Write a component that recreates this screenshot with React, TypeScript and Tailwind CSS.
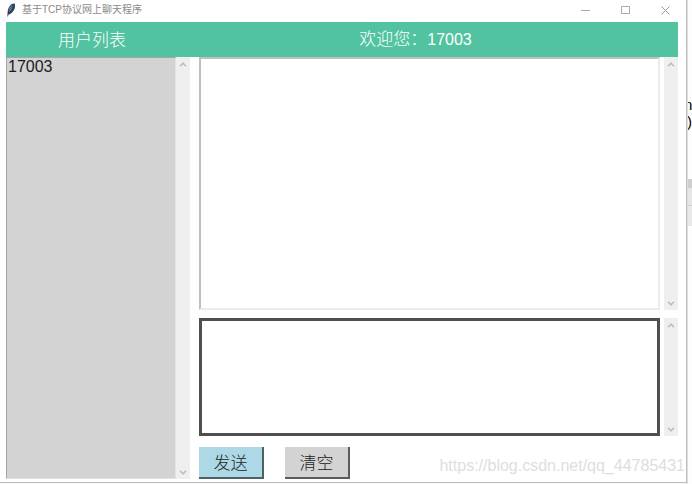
import React, { useState } from 'react';
import clsx from 'clsx';

const users = ['17003'];

function Feather() {
  return (
    <svg viewBox="0 0 10 14" className="w-[10px] h-[14px]" aria-hidden="true">
      <path d="M1.800 11.600C1.200 8.800 1.800 5.400 3.800 2.900 5.200 1.200 7.400.3 8.800.7c.6 2.200.2 4.800-1.100 6.900-1.200 1.900-2.800 3.200-4.700 3.800z" fill="#2f4358" />
      <path d="M2.800 9.400C2.600 6.800 3.800 3.800 6.600 1.900 6.400 4.600 5 7.400 2.800 9.400z" fill="#86b0dc" />
      <path d="M1.500 13.400C2.100 9.800 3.800 6 6.800 2.600" fill="none" stroke="#1b2530" strokeWidth=".7" />
    </svg>
  );
}

function WindowButtons() {
  return (
    <div className="flex h-full">
      <button aria-label="最小化" className="w-10 flex items-center justify-center">
        <svg viewBox="0 0 9 9" className="w-[9px] h-[9px]" fill="none" stroke="#aaa">
          <path d="M0 4.500h9" />
        </svg>
      </button>
      <button aria-label="最大化" className="w-10 flex items-center justify-center">
        <svg viewBox="0 0 9 9" className="w-[9px] h-[9px]" fill="none" stroke="#aaa">
          <path d="M.5.5h8v7h-8z" />
        </svg>
      </button>
      <button aria-label="关闭" className="w-10 flex items-center justify-center">
        <svg viewBox="0 0 9 9" className="w-[9px] h-[9px]" fill="none" stroke="#999">
          <path d="M.5.5l8 8M8.500.5l-8 8" />
        </svg>
      </button>
    </div>
  );
}

function Arrow({ down }: { down?: boolean }) {
  return (
    <svg viewBox="0 0 8 5" className="w-2 h-[5px]" fill="none" stroke="#bdbdbd" strokeWidth="1.600">
      <path d={down ? 'M1 .8l3 3 3-3' : 'M1 4.200l3-3 3 3'} />
    </svg>
  );
}

function ScrollBar({ className }: { className?: string }) {
  return (
    <div className={clsx('w-[14px] shrink-0 bg-[#efefef] flex flex-col justify-between', className)}>
      <button aria-label="向上滚动" className="h-[14px] flex items-center justify-center">
        <Arrow />
      </button>
      <button aria-label="向下滚动" className="h-[14px] flex items-center justify-center">
        <Arrow down />
      </button>
    </div>
  );
}

// sliver of the editor window that sits behind the chat window
function BackgroundWindow() {
  return (
    <div
      aria-hidden="true"
      className="w-[5px] shrink-0 overflow-hidden bg-[#fdfdfd] border-l border-[#dedede] pt-24 font-['Liberation_Sans'] text-[15px] leading-[17px] text-black"
    >
      <div className="-ml-1">n</div>
      <div className="-ml-px">)</div>
      <div className="mt-[49px] h-[9px] bg-[#cfcfcf]" />
      <div className="h-[18px] bg-[#e6e6e6] border-b border-[#d2d2d2]" />
      <div className="h-5 bg-[#e9e9e9]" />
    </div>
  );
}

export default function App() {
  const [log, setLog] = useState('');
  const [draft, setDraft] = useState('');

  const send = () => {
    if (!draft.trim()) return;
    setLog(log + users[0] + ': ' + draft + '\n');
    setDraft('');
  };

  return (
    <div className="flex h-screen bg-[#f7f7f7] font-['Liberation_Sans','Noto_Sans_CJK_SC',sans-serif]">
      <div className="relative flex-1 min-w-0 mb-px flex flex-col bg-white border-r border-b border-[#bdbdbd]">
        <div className="h-[22px] shrink-0 flex items-start justify-between pl-[6px] pr-px">
          <div className="flex items-center gap-[6px] pt-[3px] text-[10px] leading-[14px] text-[#8a8a8a]">
            <Feather />
            <span>基于TCP协议网上聊天程序</span>
          </div>
          <div className="h-5">
            <WindowButtons />
          </div>
        </div>

        <div className="flex-1 min-h-0 flex flex-col pl-[6px] pr-2 pb-[3px]">
          <header className="h-[35px] shrink-0 flex items-center pb-[2px] text-center text-[17px] font-light leading-6 text-white bg-[#52c3a1] font-['Noto_Sans_CJK_SC',sans-serif]">
            <h2 className="w-[172px] shrink-0 font-light">用户列表</h2>
            <h1 className="flex-1 pr-[25px] font-light">
              欢迎您：<span className="font-['Liberation_Sans'] text-[16px]">17003</span>
            </h1>
          </header>

          <div className="flex-1 min-h-0 flex gap-[9px]">
            <div className="w-[184px] shrink-0 flex">
              <ul
                aria-label="用户列表"
                className="flex-1 pl-px bg-[#d3d3d3] border border-t-[#a5a5a5] border-l-[#a5a5a5] border-r-[#e3e3e3] border-b-[#e3e3e3] text-[16px] leading-[18px] text-[#1c1c1c]"
              >
                {users.map((u) => (
                  <li key={u}>{u}</li>
                ))}
              </ul>
              <ScrollBar />
            </div>

            <div className="flex-1 min-w-0 flex flex-col">
              <div className="flex-1 min-h-0 flex gap-1">
                <textarea
                  aria-label="聊天记录"
                  readOnly
                  value={log}
                  className="flex-1 min-w-0 resize-none outline-none bg-white border-2 border-t-[#c0c0c0] border-l-[#c0c0c0] border-r-[#ebebeb] border-b-[#ebebeb] text-[16px] leading-[18px]"
                />
                <ScrollBar />
              </div>
              <div className="mt-2 h-[118px] shrink-0 flex gap-1">
                <textarea
                  aria-label="输入消息"
                  value={draft}
                  onChange={(e) => setDraft(e.target.value)}
                  className="flex-1 min-w-0 resize-none outline-none bg-white border-3 border-[#4f4f4f] text-[16px] leading-[18px]"
                />
                <ScrollBar />
              </div>
              <div className="mt-[11px] flex gap-[21px] text-[17px] leading-[28px] text-[#222] font-['Noto_Sans_CJK_SC',sans-serif]">
                <button
                  onClick={send}
                  className="w-[65px] h-8 bg-[#add8e6] border-r-2 border-b-2 border-[#4d6066] font-light"
                >
                  发送
                </button>
                <button
                  onClick={() => setLog('')}
                  className="w-[65px] h-8 bg-[#d3d3d3] border-r-2 border-b-2 border-[#5c5c5c] font-light"
                >
                  清空
                </button>
              </div>
            </div>
          </div>
        </div>

        <span className="absolute right-px bottom-[6px] text-[16px] leading-5 text-[#dedede]">
          https://blog.csdn.net/qq_44785431
        </span>
      </div>
      <BackgroundWindow />
    </div>
  );
}
